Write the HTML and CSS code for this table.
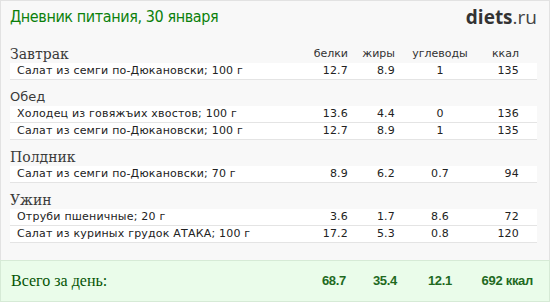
FILE: index.html
```html
<!DOCTYPE html>
<html lang="ru">
<head>
<meta charset="utf-8">
<title>Дневник питания</title>
<link rel="stylesheet" href="styles.css">
</head>
<body>
<div class="panel">
  <header class="top">
    <h1 class="title">Дневник питания, 30 января</h1>
    <div class="logo"><span class="logo-b">diets</span>.ru</div>
  </header>

  <section class="meal">
    <div class="meal-head">
      <span class="meal-name serif">Завтрак</span>
      <span class="c1">белки</span><span class="c2">жиры</span><span class="c3">углеводы</span><span class="c4">ккал</span>
    </div>
    <div class="row"><span class="name">Салат из семги по-Дюкановски; 100 г</span><span class="c1">12.7</span><span class="c2">8.9</span><span class="c3">1</span><span class="c4">135</span></div>
  </section>

  <section class="meal">
    <div class="meal-head"><span class="meal-name sans">Обед</span></div>
    <div class="row"><span class="name">Холодец из говяжъих хвостов; 100 г</span><span class="c1">13.6</span><span class="c2">4.4</span><span class="c3">0</span><span class="c4">136</span></div>
    <div class="row"><span class="name">Салат из семги по-Дюкановски; 100 г</span><span class="c1">12.7</span><span class="c2">8.9</span><span class="c3">1</span><span class="c4">135</span></div>
  </section>

  <section class="meal">
    <div class="meal-head"><span class="meal-name serif">Полдник</span></div>
    <div class="row"><span class="name">Салат из семги по-Дюкановски; 70 г</span><span class="c1">8.9</span><span class="c2">6.2</span><span class="c3">0.7</span><span class="c4">94</span></div>
  </section>

  <section class="meal">
    <div class="meal-head"><span class="meal-name serif">Ужин</span></div>
    <div class="row"><span class="name">Отруби пшеничные; 20 г</span><span class="c1">3.6</span><span class="c2">1.7</span><span class="c3">8.6</span><span class="c4">72</span></div>
    <div class="row"><span class="name">Салат из куриных грудок АТАКА; 100 г</span><span class="c1">17.2</span><span class="c2">5.3</span><span class="c3">0.8</span><span class="c4">120</span></div>
  </section>

  <div class="total">
    <span class="total-label">Всего за день:</span>
    <span class="c1">68.7</span><span class="c2">35.4</span><span class="c3">12.1</span><span class="c4">692 ккал</span>
  </div>
</div>
</body>
</html>
```

FILE: styles.css
```css
* { box-sizing: border-box; }
html, body { margin: 0; padding: 0; }
body { width: 550px; height: 302px; overflow: hidden; background: #f8f8f8; }

.panel {
  width: 550px;
  height: 302px;
  border: 1px solid #e2e2e2;
  background: #f8f8f8;
  display: flex;
  flex-direction: column;
}

.top {
  height: 36px;
  display: flex;
  justify-content: space-between;
  align-items: flex-start;
  padding: 6px 12px 0 9px;
}
.title {
  margin: 0;
  font: normal 16px/20px "DejaVu Sans Condensed", "DejaVu Sans", sans-serif;
  letter-spacing: -0.4px;
  color: #0b800b;
}
.logo {
  font: 400 19px/24px "Open Sans", sans-serif;
  color: #444;
  margin-top: -2px;
}
.logo-b { font-weight: 700; color: #333; }

.meal-head,
.row,
.total {
  display: grid;
  grid-template-columns: 1fr 50px 47px 90px 34px;
  align-items: center;
}

.meal-head {
  height: 26px;
  margin: 0 12px 0 9px;
  padding: 8px 18px 0 0;
  font: 11px/18px "DejaVu Sans", sans-serif;
  color: #333;
}
.meal-name { color: #3a3a3a; }
.meal-name.serif { font: 14px/18px "DejaVu Serif", serif; }
.meal-name.sans { font: 13px/18px "DejaVu Sans", sans-serif; }

.row {
  height: 17px;
  margin: 0 12px 0 9px;
  padding: 0 18px 0 7px;
  background: #fff;
  border-bottom: 1px solid #e4e4e4;
  font: 11px/16px "DejaVu Sans", sans-serif;
  letter-spacing: 0.2px;
  color: #222;
}

.c1, .c2, .c4 { text-align: right; }
.c3 { text-align: center; }

.total {
  margin-top: auto;
  height: 42px;
  margin-left: -1px;
  margin-right: -1px;
  margin-bottom: -1px;
  padding: 0 16px 0 10px;
  grid-template-columns: 1fr 50px 51px 86px 50px;
  background: #eafcea;
  border: 1px solid #d6ead6;
  font: bold 13px/18px "Liberation Sans", sans-serif;
  letter-spacing: -0.3px;
  color: #1f6a1f;
}
.total .c4 { justify-self: end; white-space: nowrap; }
.total-label {
  font: 16px/18px "Liberation Serif", serif;
  letter-spacing: 0;
  color: #045404;
}
```
